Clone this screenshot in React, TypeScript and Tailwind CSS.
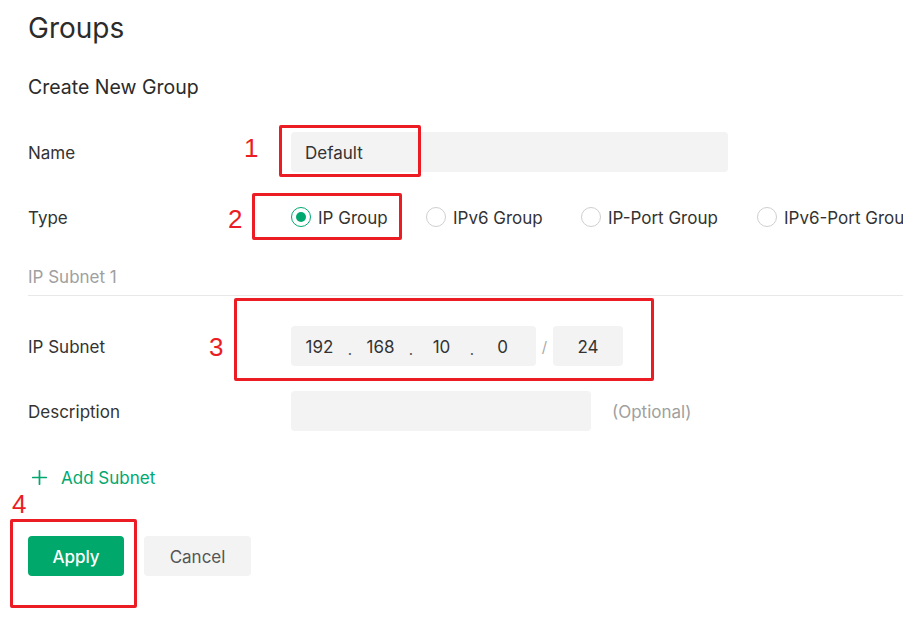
import { Plus } from "lucide-react";

const FONT = { fontFamily: "Inter, 'Noto Sans', sans-serif" };

function Radio({ label, checked, width }: { label: string; checked?: boolean; width: string }) {
  return (
    <label className={`flex shrink-0 items-center gap-[7px] ${width}`}>
      <span
        className={`flex size-[20px] items-center justify-center rounded-full border ${
          checked ? "border-[#00a870]" : "border-[#cfcfcf]"
        }`}
      >
        {checked && <span className="size-[10px] rounded-full bg-[#00a870]" />}
      </span>
      <span className="whitespace-nowrap pt-[3px] text-[17px] text-[#333]">{label}</span>
    </label>
  );
}

function Row({ label, children, className = "" }: { label: string; children: React.ReactNode; className?: string }) {
  return (
    <div className={`flex h-[40px] items-center ${className}`}>
      <div className="w-[263px] shrink-0 pt-[4px] text-[17px] text-[#333]">{label}</div>
      {children}
    </div>
  );
}

// red annotation box + number drawn over the form
function Mark({ n, box, num }: { n: string; box: string; num: string }) {
  return (
    <>
      <div className={`pointer-events-none absolute rounded-[2px] border-[3px] border-[#ec1c24] ${box}`} />
      <div
        className={`absolute text-[26px] leading-none text-[#ec1c24] ${num}`}
        style={{ fontFamily: "'Liberation Sans', Arial, sans-serif" }}
      >
        {n}
      </div>
    </>
  );
}

export default function App() {
  const octets = ["192", "168", "10", "0"];

  return (
    <div className="relative h-[644px] w-[903px] overflow-hidden bg-white pl-[28px] pt-[10px]" style={FONT}>
      <h1 className="text-[28px] leading-[36px] text-[#2b2b2b]">Groups</h1>
      <h2 className="mt-[27px] text-[19.5px] leading-[28px] text-[#2b2b2b]">Create New Group</h2>

      <Row label="Name" className="mt-[31px]">
        <div className="flex h-[40px] w-[437px] items-center rounded-[4px] bg-[#f3f3f3] px-[14px] pt-[3px] text-[17px] text-[#333]">
          Default
        </div>
      </Row>

      <Row label="Type" className="mt-[25px]">
        <div className="flex items-center">
          <Radio label="IP Group" checked width="w-[135px]" />
          <Radio label="IPv6 Group" width="w-[155px]" />
          <Radio label="IP-Port Group" width="w-[176px]" />
          <Radio label="IPv6-Port Group" width="w-[160px]" />
        </div>
      </Row>

      <div className="mt-[26px] border-b border-[#e8e8e8] pb-[6px] pt-[2px] text-[17px] leading-[24px] text-[#a0a0a0]">
        IP Subnet 1
      </div>

      <Row label="IP Subnet" className="mt-[30px]">
        <div className="flex h-[40px] w-[245px] items-center rounded-[4px] bg-[#f3f3f3] pl-[5px] pt-[3px] text-[17px] text-[#333]">
          {octets.map((o, i) => (
            <div key={i} className="flex items-center">
              {i > 0 && <span className="w-[14px] pt-[6px] text-center text-[15px] text-[#555]">.</span>}
              <span className="w-[47px] text-center">{o}</span>
            </div>
          ))}
        </div>
        <span className="w-[17px] pt-[3px] text-center text-[15px] text-[#aaa]">/</span>
        <div className="flex h-[40px] w-[70px] items-center justify-center rounded-[4px] bg-[#f3f3f3] pt-[3px] text-[17px] text-[#333]">
          24
        </div>
      </Row>

      <Row label="Description" className="mt-[25px]">
        <div className="h-[40px] w-[300px] rounded-[4px] bg-[#f3f3f3]" />
        <span className="ml-[21px] pt-[4px] text-[17px] text-[#a0a0a0]">(Optional)</span>
      </Row>

      <button className="mt-[34px] flex h-[24px] items-center gap-[10px] text-[17px] text-[#00a870]">
        <Plus className="size-[23px]" strokeWidth={1.8} />
        <span className="pt-[3px]">Add Subnet</span>
      </button>

      <div className="mt-[47px] flex gap-[20px]">
        <button className="h-[40px] w-[96px] rounded-[4px] bg-[#00a86b] pt-[3px] text-[17px] font-medium text-white">
          Apply
        </button>
        <button className="h-[40px] w-[107px] rounded-[4px] bg-[#f3f3f3] pt-[3px] text-[17px] text-[#555]">
          Cancel
        </button>
      </div>

      <Mark n="1" box="left-[279px] top-[125px] h-[52px] w-[142px]" num="left-[244px] top-[135px]" />
      <Mark n="2" box="left-[252px] top-[193px] h-[47px] w-[150px]" num="left-[228px] top-[206px]" />
      <Mark n="3" box="left-[234px] top-[298px] h-[83px] w-[420px]" num="left-[209px] top-[334px]" />
      <Mark n="4" box="left-[10px] top-[519px] h-[89px] w-[127px]" num="left-[12px] top-[491px]" />
    </div>
  );
}
